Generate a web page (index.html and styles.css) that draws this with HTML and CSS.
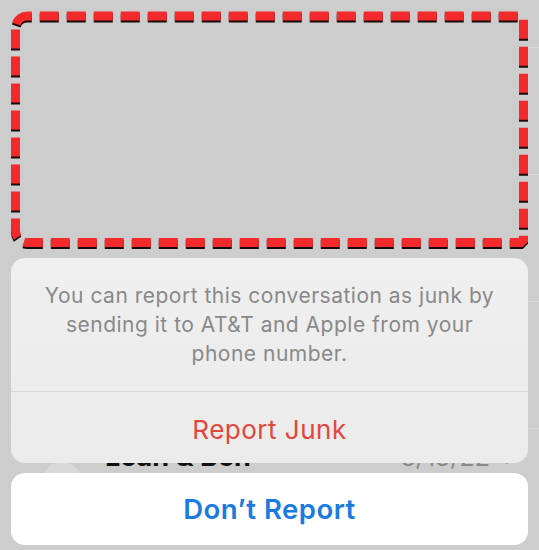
FILE: index.html
```html
<!DOCTYPE html>
<html>
<head>
<meta charset="utf-8">
<link rel="stylesheet" href="styles.css">
</head>
<body>
<div class="frame">
  <svg class="dash" width="539" height="258" viewBox="0 0 539 258">
    <path class="dash-path" d="M 15.5 28 A 12 12 0 0 1 27.5 16 L 521 16 L 523.5 18.5 L 523.5 240 L 521 242.5 L 27.5 242.5 A 12 12 0 0 1 15.5 230.5 Z"/>
  </svg>
</div>
<div class="sheet">
  <div class="alert">
    <p class="message">You can report this conversation as junk by sending it to AT&amp;T and Apple from your phone number.</p>
    <div class="action destructive">Report Junk</div>
  </div>
  <div class="peek">
    <div class="row">
      <span class="avatar"></span>
      <span class="name">Leah &amp; Ben</span>
      <span class="date">8/13/22</span>
      <span class="chev">›</span>
    </div>
  </div>
  <div class="cancel">Don’t Report</div>
</div>
</body>
</html>
```

FILE: styles.css
```css
html, body {
  margin: 0;
  padding: 0;
}
body {
  width: 539px;
  height: 550px;
  overflow: hidden;
  background-color: #cdcdcd;
  background-image: repeating-linear-gradient(to bottom, transparent 0 47px, #dadada 47px 48px, transparent 48px 127px);
  background-size: 11px 100%;
  background-position: right top;
  background-repeat: no-repeat;
  font-family: Inter, "Noto Sans", sans-serif;
}
.frame {
  height: 258px;
}
.dash {
  display: block;
}
.dash-path {
  fill: none;
  stroke: #f22a2c;
  stroke-width: 9;
  stroke-dasharray: 19 8;
  stroke-dashoffset: -4;
  filter: drop-shadow(0 2px 0 #1a0a0a);
}
.sheet {
  padding: 0 11px;
  display: flex;
  flex-direction: column;
}
.alert {
  height: 205px;
  border-radius: 14px;
  background: linear-gradient(to bottom, #efefef, #ebebeb);
  display: flex;
  flex-direction: column;
  overflow: hidden;
}
.message {
  margin: 0;
  height: 134px;
  box-sizing: border-box;
  padding: 23px 24px 0;
  text-align: center;
  color: #898989;
  font-size: 21px;
  letter-spacing: 0.5px;
  line-height: 29px;
  border-bottom: 1px solid #d6d6d6;
}
.action {
  flex: 1;
  display: flex;
  align-items: center;
  justify-content: center;
  font-size: 26px;
  letter-spacing: 0.5px;
  padding-top: 3px;
}
.destructive {
  color: #e3463e;
}
.peek {
  height: 10px;
  overflow: hidden;
}
.row {
  display: flex;
  align-items: baseline;
  height: 30px;
  line-height: 30px;
  margin-top: -21px;
}
.avatar {
  width: 40px;
  height: 40px;
  border-radius: 50%;
  background: #d9d9d9;
  margin-left: 31px;
  align-self: flex-start;
  margin-top: 20px;
}
.name {
  margin-left: 23px;
  font-size: 27px;
  font-weight: 700;
  color: #111;
}
.date {
  margin-left: auto;
  font-size: 25px;
  color: #8a8a8a;
}
.chev {
  margin-left: 14px;
  margin-right: 14px;
  font-size: 26px;
  color: #aaa;
}
.cancel {
  height: 72px;
  border-radius: 14px;
  background: #ffffff;
  display: flex;
  align-items: center;
  justify-content: center;
  font-size: 27.5px;
  letter-spacing: 0.5px;
  font-weight: 600;
  color: #1b7be0;
}
```
